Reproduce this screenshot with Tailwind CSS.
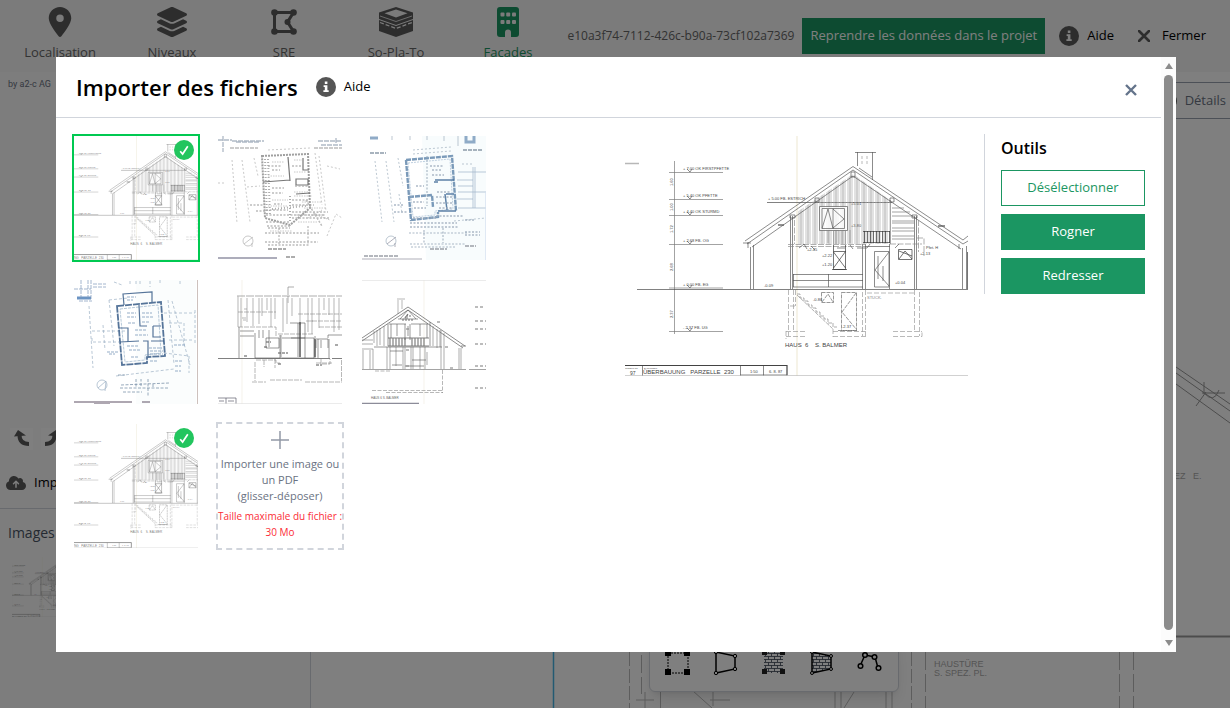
<!DOCTYPE html>
<html lang="fr">
<head>
<meta charset="utf-8">
<meta name="viewport" content="width=device-width, initial-scale=1">
<title>Importer des fichiers</title>
<script src="https://cdn.jsdelivr.net/npm/@tailwindcss/browser@4"></script>
</head>
<body class="h-screen overflow-hidden bg-white font-['Open_Sans','Noto_Sans',sans-serif] text-[13px] text-black">

<!-- Shared drawings -->
<svg class="absolute h-0 w-0" aria-hidden="true">
  <defs>
    <pattern id="boards" width="7" height="10" patternUnits="userSpaceOnUse">
      <path d="M1 0V10" stroke="#777" stroke-width=".7"/><path d="M3 0V10M6 0V10" stroke="#aaa" stroke-width=".7"/>
    </pattern>
    <pattern id="brick" width="6" height="6" patternUnits="userSpaceOnUse">
      <path d="M0 .5H6M0 3.500H6M1.500 .5V3.500M4.500 3.500V6.500" stroke="#374151" stroke-width=".8" fill="none"/>
    </pattern>
    <symbol id="info" viewBox="0 0 20 20">
      <circle cx="10" cy="10" r="10" fill="currentColor"/>
      <path d="M8.800 4.600h2.600v2.500H8.800zM7.600 8.300h3.800v5h1.300v1.700H7.400v-1.700h1.400v-3.300H7.600z" fill="#fff"/>
    </symbol>
    <symbol id="check" viewBox="0 0 20 20">
      <circle cx="10" cy="10" r="10" fill="#22c55e"/>
      <path d="M6.200 11.200L8.600 14L13.800 6.200" fill="none" stroke="#fff" stroke-width="1.700"/>
    </symbol>
    <g id="elevation" fill="none" stroke="#555" stroke-width=".8" font-family="Liberation Sans, sans-serif">
      <path d="M0 27.500H14" stroke="#aaa" stroke-width="1.500"/>
      <path d="M172 0V240" stroke="#f0ecda" stroke-width="1.500"/>
      <path d="M49.500 25V198M44 36.500H98M44 63.500H98M44 79.500H98M44 108.500H98M44 152H98M44 195.500H98" stroke="#777"/>
      <path d="M62 33l3 3 2-3M62 60l3 3 2-3M62 76l3 3 2-3M62 105l3 3 2-3M62 149l3 3 2-3M62 192l3 3 2-3"/>
      <g fill="#444" stroke="none" font-size="4">
        <text x="58" y="34">+ 7.00 OK FIRSTPFETTE</text><text x="58" y="61">+ 5.40 OK PFETTE</text>
        <text x="58" y="77">+ 4.40 OK STURMD</text><text x="58" y="106">+ 2.68 FB. OG</text>
        <text x="58" y="150">+ 0.00 FB. EG</text><text x="58" y="193">- 2.37 FB. UG</text>
        <text x="143" y="64">+ 5.00 FB. ESTRICH</text>
        <text transform="translate(48 50) rotate(-90)">1.60</text><text transform="translate(48 75) rotate(-90)">1.00</text>
        <text transform="translate(48 97) rotate(-90)">1.72</text><text transform="translate(48 135) rotate(-90)">2.68</text>
        <text transform="translate(48 182) rotate(-90)">2.37</text>
        <text x="139" y="151">-0.09</text><text x="226" y="91">+3.80</text><text x="226" y="69">+5.01</text>
        <text x="197" y="121">+2.22</text><text x="197" y="130">+1.20</text><text x="182" y="115">+2.45</text>
        <text x="188" y="165">-0.86</text><text x="270" y="148">+0.04</text><text x="295" y="119">+2.13</text><text x="217" y="192">-2.37</text>
        <text x="242" y="163" fill="#888">STUCK.</text><text x="301" y="113">Pfet. H</text>
      </g>
      <path d="M142 66.500H267M12 153.500H343" stroke="#444"/>
      <!-- roof -->
      <path d="M172 76L228 38L265 64V108H172Z" fill="url(#boards)" stroke="none"/>
      <path d="M120 105L228 30.500L338 104L343 100M122 108L228 34L338 108L343 105M127 111L228 40L336 113M118 107H126M123 106V112M334 113V108"/>
      <path d="M153 89H159M313 90H320" stroke-width="1.500"/>
      <path d="M230 16.500H251M232.500 16V30M247.500 16V44M234 32L247 41M226 36h4v5h-4zM190 62h4v4h-4zM265 62h4v4h-4zM165 79h5v3h-5zM287 79h5v3h-5z"/>
      <path d="M237 20V28M242 20V28" stroke-dasharray="3 2" stroke="#999"/>
      <!-- side boards -->
      <path d="M265.500 64V108M267 72H279M267 76H285M267 80H288M267 85H289M267 87H289M267 92H289M267 95H289M267 100H289M267 103H289" stroke="#777"/>
      <!-- walls and posts -->
      <path d="M125.500 111V153M128.500 109V153M165.500 80V153M167.500 80V153M289.500 80V153M291.500 80V153M337.500 112V153M341.500 110V153" stroke="#555"/>
      <path d="M342.500 116V153" stroke="#333"/>
      <path d="M169.500 84V108M293.500 84V116M292 102H299V120M163 108.500H240M163 110.500H240M265 108H297" stroke="#888" stroke-dasharray="6 1.500"/>
      <path d="M174 112l5-4 3 5M186 110l4 4M212 112h8M225 109l3 4M270 112l4-4M232 112h10l3-4"/>
      <!-- openings -->
      <path d="M194.500 70.500H222.500V94.500H194.500zM197 72.500H219.500V92.500H197zM208 72.500V92.500M197 92.500L203 73L208 92.500M208 73L219 83L208 92" fill="#fff" fill-opacity=".8"/>
      <path d="M208.500 94V108M211 95V108M214 95V108M217 95V108M220.500 94V108M203 94V107M225 94V107" stroke="#888"/>
      <path d="M208.500 109V133.500H220.500V109M208.500 115.500H220.500L208.500 132M208.500 116L220.500 132M207 133.500H222" stroke="#333"/>
      <path d="M238 95.500H265M238 106.500H265M239.500 95V107M242.500 95V107M245.500 95V107M248.500 95V107M251.500 95V107M254.500 95V107M257.500 95V107M260.500 95V107M264.500 95V107" stroke="#333"/>
      <path d="M168 138.500H238M168 144.500H238M168 151H238M203.500 138V151M168.500 138V151" stroke="#555"/>
      <path d="M237.500 108V153M240.500 108V153M240 110.500H265M264.500 108V153M249.500 115.500H264V151H249.500zM264 116L250 134L264 150M253 120V143M258 130V145" stroke="#555"/>
      <path d="M273.500 113.500H287V123.500H273.500zM274 123L280 115L287 123M274 115L287 120" stroke="#333"/>
      <!-- basement -->
      <path d="M163.500 154V200M168.500 154V195M170.500 154V170M165 170H171M237.500 156V200M240.500 154V200M289.500 154V195M294.500 156V200M242 157H289M161 195.500H180M161 200.500H182M161 195V203M208 195.500H241M208 200.500H241M208 193V201M268 195.500H297M268 200.500H297V195" stroke="#999" stroke-dasharray="5 2"/>
      <path d="M172 158h3v4h4v3h4v4h4v3h4v4h4v4h4v3h4v4h5v4h4M172 159L208 193" stroke="#888" stroke-dasharray="4 1"/>
      <path d="M196.500 156.500H208.500V166.500H196.500zM197 166L203 158L208 166M216.500 156.500H231.500V194.500H216.500zM231 157L217 176L231 193M213 194.500H233" stroke="#666" stroke-dasharray="4 1"/>
      <text x="160" y="211" font-size="6" fill="#444" stroke="none" xml:space="preserve">HAUS  6    S. BALMER</text>
      <!-- title block -->
      <path d="M0 229.500H162V239.500" stroke="#222" stroke-width="1.200"/>
      <path d="M17.500 230V240M115.500 230V240M138.500 230V240M115 239H162" stroke="#555"/>
      <path d="M0 239.500H343" stroke="#bbb" stroke-width=".8"/>
      <g fill="#444" stroke="none"><text x="18" y="238" font-size="6" xml:space="preserve">ÜBERBAUUNG   PARZELLE  230</text>
      <text x="0" y="233" font-size="2">PROJEKT NR</text><text x="19" y="233" font-size="2">BAUPROJEKT</text><text x="5" y="239" font-size="5">97</text>
      <text x="125" y="237" font-size="4">1:50</text><text x="144" y="237" font-size="4">6. 8. 87</text></g>
    </g>
  </defs>
</svg>

<div class="flex h-full flex-col">
  <header class="flex h-[72px] shrink-0 items-start bg-[#f6f6f6] pl-1 text-[#666]">
    <nav class="flex shrink-0">
      <a href="#" class="flex w-28 flex-col items-center gap-1 pt-[7px] leading-[22px]">
        <svg class="h-[30px] w-[30px]" viewBox="-64 0 512 512" fill="#5a5a5a"><path d="M215.700 499.200C267 435 384 279.400 384 192C384 86 298 0 192 0S0 86 0 192c0 87.400 117 243 168.300 307.200c12.300 15.300 35.100 15.300 47.400 0zM192 128a64 64 0 1 1 0 128 64 64 0 1 1 0-128z"/></svg>
        Localisation</a>
      <a href="#" class="flex w-28 flex-col items-center gap-1 pt-[7px] leading-[22px]">
        <svg class="h-[30px] w-[34px]" viewBox="0 0 576 512" fill="#5a5a5a"><path d="M264.500 5.200c14.900-6.900 32.100-6.900 47 0l218.600 101c8.500 3.900 13.900 12.400 13.900 21.800s-5.400 17.900-13.900 21.800l-218.600 101c-14.900 6.900-32.100 6.900-47 0L45.900 149.800C37.400 145.800 32 137.300 32 128s5.400-17.900 13.900-21.800L264.500 5.200zM476.900 209.600l53.200 24.600c8.500 3.900 13.900 12.400 13.900 21.800s-5.400 17.900-13.900 21.800l-218.600 101c-14.900 6.900-32.100 6.900-47 0L45.900 277.800C37.400 273.800 32 265.300 32 256s5.400-17.900 13.900-21.800l53.200-24.600 152 70.200c23.400 10.800 50.400 10.800 73.800 0l152-70.200zm-152 198.200l152-70.200 53.200 24.600c8.500 3.900 13.900 12.400 13.900 21.800s-5.400 17.900-13.900 21.800l-218.600 101c-14.900 6.900-32.100 6.900-47 0L45.900 405.800C37.400 401.800 32 393.300 32 384s5.400-17.900 13.900-21.800l53.200-24.600 152 70.200c23.400 10.800 50.400 10.800 73.800 0z"/></svg>
        Niveaux</a>
      <a href="#" class="flex w-28 flex-col items-center gap-1 pt-[7px] leading-[22px]">
        <svg class="h-[30px] w-[30px]" viewBox="0 0 30 30"><path d="M5.500 5.500H24.500L18.500 15L24.500 24.500H5.500Z" fill="none" stroke="#5a5a5a" stroke-width="3"/><g fill="#5a5a5a"><circle cx="5.500" cy="5.500" r="3.300"/><circle cx="24.500" cy="5.500" r="3.300"/><circle cx="18.500" cy="15" r="3"/><circle cx="5.500" cy="24.500" r="3.300"/><circle cx="24.500" cy="24.500" r="3.300"/></g></svg>
        SRE</a>
      <a href="#" class="flex w-28 flex-col items-center gap-1 pt-[7px] leading-[22px]">
        <svg class="h-[30px] w-[34px]" viewBox="0 0 34 30"><path fill="#5a5a5a" d="M17 0L34 5.500V12L17 18L0 12V5.500ZM0 13L17 19L34 13V24L17 30L0 24Z"/><path fill="#f6f6f6" d="M17 2.500L28.500 6.300L17 10.500L5.500 6.300Z"/><path d="M1 9L17 14.500L33 9" fill="none" stroke="#f6f6f6" stroke-width=".8"/><path d="M1 15.500L17 21.500L33 15.500" fill="none" stroke="#f6f6f6" stroke-width="1.300" stroke-dasharray="4 2"/></svg>
        So-Pla-To</a>
      <a href="#" class="flex w-28 flex-col items-center gap-1 pt-[7px] leading-[22px] text-[#1b9662]">
        <svg class="h-[30px] w-[22px]" viewBox="0 0 22 30"><path fill="#1b9662" fill-rule="evenodd" d="M3 0H19a3 3 0 0 1 3 3V27a3 3 0 0 1-3 3H14V25.500a3 3 0 0 0-6 0V30H3a3 3 0 0 1-3-3V3a3 3 0 0 1 3-3Z"/><g fill="#f6f6f6"><rect x="3.500" y="5.500" width="4" height="4" rx="1"/><rect x="9.200" y="5.500" width="4" height="4" rx="1"/><rect x="15" y="5.500" width="4" height="4" rx="1"/><rect x="3.500" y="13" width="4" height="4" rx="1"/><rect x="9.200" y="13" width="4" height="4" rx="1"/><rect x="15" y="13" width="4" height="4" rx="1"/></g></svg>
        Facades</a>
    </nav>
    <div class="ml-auto flex h-9 items-center self-center pr-6 whitespace-nowrap">
      <span class="mr-2 text-xs">e10a3f74-7112-426c-b90a-73cf102a7369</span>
      <button class="h-9 bg-[#1b9662] px-2 text-white">Reprendre les données dans le projet</button>
      <button class="ml-3.5 flex items-center gap-2 text-black"><svg class="h-5 w-5 text-[#5a5a5a]"><use href="#info"/></svg>Aide</button>
      <button class="ml-6 flex items-center gap-3 text-black"><svg class="h-3 w-3" viewBox="0 0 12 12"><path d="M1 1L11 11M11 1L1 11" stroke="#5a5a5a" stroke-width="2.600" stroke-linecap="round"/></svg>Fermer</button>
    </div>
  </header>

  <div class="flex min-h-0 flex-1">
    <aside class="flex w-[311px] shrink-0 flex-col border-r border-gray-300 bg-[#fbfbfb]">
      <p class="px-2 pt-1.5 font-['Roboto'] text-[9px] leading-3 text-gray-500">by a2-c AG</p>
      <div class="mt-auto flex gap-2 px-2.5">
        <button aria-label="Annuler" class="h-[22px] w-[23px] bg-white"><svg class="h-[22px] w-[23px]" viewBox="0 0 23 22"><path d="M9.500 7C9.500 12 12 16 19 16" fill="none" stroke="#5a5a5a" stroke-width="4"/><path d="M4 8.500L8 2L16 7.500L10 8Z" fill="#5a5a5a"/></svg></button>
        <button aria-label="Rétablir" class="h-[22px] w-[23px] bg-white"><svg class="h-[22px] w-[23px]" viewBox="0 0 23 22"><path d="M13.500 7C13.500 12 11 16 4 16" fill="none" stroke="#5a5a5a" stroke-width="4"/><path d="M19 8.500L15 2L7 7.500L13 8Z" fill="#5a5a5a"/></svg></button>
      </div>
      <button class="mt-5 flex h-[26px] items-center gap-2 px-1.5"><svg class="h-4 w-5" viewBox="0 0 640 512" fill="#5a5a5a"><path d="M144 480C64.500 480 0 415.500 0 336c0-62.800 40.200-116.200 96.200-135.900c-.1-2.700-.2-5.400-.2-8.100c0-88.400 71.600-160 160-160c59.300 0 111 32.200 138.700 80.200C409.900 102 428.300 96 448 96c53 0 96 43 96 96c0 12.200-2.300 23.800-6.400 34.600C596 238.400 640 290.100 640 352c0 70.700-57.300 128-128 128H144zm79-217c-9.400 9.400-9.400 24.600 0 33.900s24.600 9.400 33.900 0l39-39V392c0 13.300 10.700 24 24 24s24-10.700 24-24V257.900l39 39c9.400 9.400 24.600 9.400 33.900 0s9.400-24.600 0-33.900l-80-80c-9.400-9.400-24.600-9.400-33.900 0l-80 80z"/></svg>Importer</button>
      <div class="mt-3 h-[200px] border-t border-gray-300 px-2 pt-3">
        <h2 class="text-sm leading-6 text-gray-600">Images</h2>
        <svg class="mt-3 ml-1 h-[60px] w-[60px]" viewBox="51 0 240 240" stroke-opacity=".9" fill-opacity=".7"><use href="#elevation"/></svg>
      </div>
    </aside>
    <main class="relative min-w-0 flex-1 overflow-hidden bg-white">
      <svg class="absolute inset-0 h-full w-full" aria-hidden="true">
        <g transform="translate(-311 -72)" fill="none" stroke="#bbb" stroke-width="1">
          <path d="M553.500 119V708" stroke="#46b4e4" stroke-width="1.500"/>
          <path d="M1176 367L1230 404M1176 373L1230 411M1176 384L1230 423M1204 382V394M1196 406L1206 392M1202 393H1225M1204 393Q1214 404 1219 390" stroke="#999"/>
          <path d="M1170 636.500H1230" stroke="#999" stroke-width="2"/>
          <path d="M629.500 652V708M911.500 652V708" stroke-dasharray="14 3"/><path d="M641.500 655V694M636 700H656M645 692V708M925.500 652V708M1119.500 652V708M1133.500 652V708" stroke-dasharray="18 4"/>
          <path d="M660.500 690V708M693 691L712 708M713 691V706M710 700H730M835 691V708M841 691V708M854 692L844 708M886 691V708M892 691V708"/>
          <g font-family="Liberation Sans, sans-serif" font-size="9" fill="#aaa" stroke="none"><text x="934" y="667">HAUSTÜRE</text><text x="934" y="676">S. SPEZ. PL.</text><text x="1174" y="479" xml:space="preserve">EZ   E.</text></g>
        </g>
      </svg>
      <div class="relative mt-2.5 flex h-[37px] items-center justify-end gap-2 border-y border-gray-400 bg-white pr-1 text-gray-500">
        <svg class="h-4 w-4" viewBox="0 0 20 20"><circle cx="10" cy="10" r="10" fill="#5a5a5a"/></svg>
        <button>Détails</button>
      </div>
      <div class="absolute bottom-4 left-[338px] flex h-[57px] rounded-md border border-gray-300 bg-white px-1 pt-3.5 shadow-lg">
        <button aria-label="Rectangle" class="flex w-12 justify-center"><svg class="h-[26px] w-[26px]" viewBox="0 0 26 26"><path d="M3 3H23V23H3Z" fill="none" stroke="#000" stroke-dasharray="2 1"/><path d="M0 0h6v6H0zM19 0h6v6h-6zM0 19h6v6H0zM19 19h6v6h-6z"/></svg></button>
        <button aria-label="Polygone" class="flex w-12 justify-center"><svg class="h-[26px] w-[26px]" viewBox="0 0 26 26"><path d="M3 2L22 6V19L3 23Z" fill="none" stroke="#000" stroke-width="1.500"/><g fill="#fff" stroke="#000"><circle cx="3" cy="2" r="1.700"/><circle cx="22" cy="6" r="1.700"/><circle cx="22" cy="19" r="1.700"/><circle cx="3" cy="23" r="1.700"/></g></svg></button>
        <button aria-label="Rectangle texturé" class="flex w-12 justify-center"><svg class="h-[26px] w-[26px]" viewBox="0 0 26 26"><path d="M3 2H22V23H3Z" fill="url(#brick)"/><path fill="#222" d="M1 0h5v5H1zM19 0h5v5h-5zM1 19h5v5H1zM19 19h5v5h-5z"/></svg></button>
        <button aria-label="Polygone texturé" class="flex w-12 justify-center"><svg class="h-[26px] w-[26px]" viewBox="0 0 26 26"><path d="M3 2L22 6V19L3 23Z" fill="url(#brick)" stroke="#000" stroke-width="1.500"/><g fill="#fff" stroke="#000"><circle cx="3" cy="2" r="1.500"/><circle cx="22" cy="6" r="1.500"/><circle cx="22" cy="19" r="1.500"/><circle cx="3" cy="23" r="1.500"/></g></svg></button>
        <button aria-label="Ligne brisée" class="flex w-12 justify-center"><svg class="h-[26px] w-[26px]" viewBox="0 0 26 26"><path d="M3 16L8 5L18 7L21 18" fill="none" stroke="#000" stroke-width="1.500"/><g fill="#fff" stroke="#000" stroke-width="1.500"><circle cx="3.500" cy="16" r="2.300"/><circle cx="8" cy="5" r="2.300"/><circle cx="17.500" cy="7" r="2.300"/><circle cx="21.500" cy="18" r="2.300"/></g></svg></button>
      </div>
    </main>
  </div>
</div>

<!-- Import dialog -->
<div class="fixed inset-0 flex bg-black/50 pt-[57px] pr-[54px] pb-14 pl-14">
  <section role="dialog" aria-labelledby="dialog-title" class="flex min-w-0 flex-1 overflow-hidden bg-white">
    <div class="flex min-w-0 flex-1 flex-col">
      <div class="flex h-[61px] shrink-0 items-center border-b border-gray-300 pr-5 pl-5">
        <h1 id="dialog-title" class="text-[22px] font-semibold">Importer des fichiers</h1>
        <button class="ml-[18px] flex items-center gap-2"><svg class="h-5 w-5 text-[#555]"><use href="#info"/></svg>Aide</button>
        <button aria-label="Fermer" class="mt-1.5 ml-auto flex h-5 w-5 items-center justify-center"><svg class="h-3 w-3" viewBox="0 0 12 12"><path d="M1 1L11 11M11 1L1 11" stroke="#64748b" stroke-width="2.400"/></svg></button>
      </div>
      <div class="flex flex-1 items-start p-4">
        <div class="grid w-1/2 max-w-[448px] min-w-[432px] grid-cols-[repeat(auto-fill,128px)] gap-4 pr-4">
          <button aria-label="Façade sud, sélectionnée" class="relative h-32 w-32 border-2 border-green-500">
            <svg class="h-full w-full" viewBox="51 0 240 240" stroke-opacity=".75" fill-opacity=".7"><use href="#elevation"/></svg>
            <svg class="absolute top-1 right-1 h-5 w-5"><use href="#check"/></svg>
          </button>
          <button aria-label="Plan 1" class="h-32 w-32 border-2 border-transparent">
            <svg class="h-full w-full" viewBox="0 0 124 124" fill="none" stroke="#aaa" stroke-width=".8" stroke-opacity=".8">
              <path d="M0 4H14M5 0V16M14 5H46M18 6H42M100 5H124M103 9H124M118 2V8" stroke="#9ba7b8" stroke-width="1.300" stroke-dasharray="5 1"/><path d="M12 12H40M96 12H124" stroke-dasharray="4 1" stroke-width="1.500"/>
              <path d="M14 24L19 87M24 24L32 86M36 22L40 40M97 17L104 69M101 20L108 75M109 100L118 78L124 82M0 47H8M29 51L42 50M109 30L122 33M50 14L92 12" stroke-dasharray="2 2"/>
              <path d="M44 20L90 18L92 72L72 89L47 82Z" stroke="#888" stroke-width="2" stroke-dasharray="2 1"/>
              <path d="M47 23L49 80M50 23L52 80M54 73L88 70M72 60V87" stroke="#999" stroke-width="2" stroke-dasharray="1 2"/>
              <path d="M70 21L72 45M45 46L72 44M78 58L92 57M78 43H90V49H78zM85 22V34H91" stroke="#555" stroke-width="1.200"/>
              <path d="M50 30H64M54 34H62M54 52H66M54 57H65M74 30H86M77 50H90M74 64H90M74 69H96M56 68H64M48 74H70M74 76H110M48 79H106M74 82H112M48 86H72M49 90H73M50 92H72M88 64L104 90M38 75H47M32 69H45" stroke-width="1.500" stroke-dasharray="2 1.500"/>
              <path d="M76 56H92M76 60H94M84 66H104M86 72H108M78 79H108M80 86H100M54 26H66M76 24H84M76 36H88M50 40H66M54 64H70M50 70H70M96 78L112 84M90 82L104 74M52 95H74" stroke-dasharray="1.500 1"/>
              <path d="M47 97H101M47 106H100M50 109H92M61 92V108M90 90V108" stroke-width="1.300" stroke-dasharray="2 1.500"/><path d="M50 113H68M68 121H78" stroke="#777" stroke-width="1.500" stroke-dasharray="4 1"/>
              <circle cx="30" cy="105" r="5"/><path d="M26 108L35 101M34 107V111"/><path d="M0 122H59" stroke="#99a" stroke-width="2"/>
            </svg></button>
          <button aria-label="Plan 2" class="h-32 w-32 border-2 border-transparent">
            <svg class="h-full w-full" viewBox="0 0 124 124" fill="none" stroke="#9dadbd" stroke-width=".8" stroke-opacity=".85">
              <path d="M60 0H124V124H64Z" fill="#f8fcfd" stroke="none"/>
              <path d="M8 2H16M104 0V6H112V0" stroke="#7d9cbd" stroke-width="3"/><path d="M8 17H24M101 14H121" stroke="#789" stroke-width="1.700" stroke-dasharray="4 1"/><path d="M30 0V4M48 0V4M65 0V4M82 0V5M96 0V10"/>
              <path d="M13 25L20 86M24 25L32 86M36 22L41 50M51 14L89 11M51 18L89 15M37 58L40 77M100 28H112M92 85L124 82" stroke-dasharray="2 2"/>
              <path d="M44 24L90 20L94 75M44 24L49 84L76 81V76M47 61L70 59L71 71" stroke="#6488ad" stroke-width="2.400" stroke-dasharray="5 1"/><path d="M46 27L88 23L91 73L73 75V79L51 81Z" stroke="#a1b9d1" stroke-dasharray="2 1"/>
              <path d="M73 44H92M72 46H76M83 58L85 74M84 58H92M76 75L94 75" stroke="#416b98" stroke-width="1.500"/>
              <path d="M111 31V72M113 31V72M96 36H124M95 44H111M96 50H111M96 56H124M95 63H111M96 72H124" stroke="#9bb0c5"/>
              <path d="M68 30H82M70 34H80M70 39H82M54 50H62M51 66H62M52 72H64M75 56H88M74 61H90M74 67H90M77 72H90M51 82H74M48 87H95M48 91H96M74 80H102M32 69H42M32 76H45M103 84H112M103 96H118M103 99H118" stroke-width="1.400" stroke-dasharray="2 1.500"/>
              <path d="M47 97H105M48 108H103M49 111H94M65 20V70M62 94V108M81 92V107" stroke-width="1.200" stroke-dasharray="2 1.500"/><path d="M2 120H36M103 110H114M68 113H85" stroke="#8a8f98" stroke-width="1.500" stroke-dasharray="4 1"/>
              <circle cx="29" cy="105" r="5"/><path d="M25 108L34 101M33 107V111M0 123H60" stroke="#889"/><path d="M123.500 55V124" stroke="#d4e0ee"/>
            </svg></button>
          <button aria-label="Plan 3" class="h-32 w-32 border-2 border-transparent">
            <svg class="h-full w-full" viewBox="0 0 124 124" fill="none" stroke="#9fb3c6" stroke-width=".8" stroke-opacity=".9">
              <path d="M62 0H122V124H62Z" fill="#fbfdfd" stroke="none"/><path d="M3 18H17" stroke="#5b88bd" stroke-width="3"/><path d="M7 0V18M14 0V18M17 0V22M0 9H17M19 4H32M19 7H32M5 21H16" stroke="#829abb" stroke-dasharray="4 1"/>
              <path d="M40 2L48 5M56 1V5M62 1V6M66 1V5M76 1V7M86 0V4M106 1V6M15 26L19 88M18 51H52M18 58V62H45M35 20L40 66M35 20L54 18M94 20L100 84M42 96L100 89M98 21L116 85M29 45L31 70M121 30V65M90 33H121M95 43H110V65M95 60H120M90 73L115 76V93" stroke-dasharray="3 2"/>
              <path d="M43 26L87 22L91 76L73 77V83L48 85Z" stroke="#43658e" stroke-width="1.800" stroke-dasharray="7 1"/><path d="M46 29L84 25L87 73L71 75V80L51 82Z" stroke="#9bb4ca" stroke-dasharray="3 1"/>
              <path d="M50 25L49 14L78 12V22M65 25L66 46H73M79 46H87M46 62L65 61M69 61H74V76M77 61H90M79 46V57H87M45 48H54V62" stroke="#43658e" stroke-width="1.200"/>
              <path d="M53 17H62M53 20H59M53 33H62M53 37H62M54 43H61M68 33H78M68 37H80M68 42H76M61 50H72M61 55H74M53 66H65M55 70H67M57 77H64M75 68H88M76 71H89M76 74H89M76 81H84M33 72H44M35 74H41M100 65H112M101 81H108M101 86H107M101 91H107" stroke="#8ba4c0" stroke-width="1.200" stroke-dasharray="3 1"/>
              <path d="M46 108H95M47 105L95 103M62 99V108M74 99V116M67 106V99M79 104V108M44 95H51M49 112H68" stroke="#7088a2" stroke-dasharray="3 1.500"/><circle cx="28" cy="105" r="5"/><path d="M24 108L32 101L31 111"/>
              <path d="M0 122H58M20 124H36M68 122H76" stroke="#887d8d" stroke-width="1.500"/><path d="M123.500 0V124" stroke="#b9a8a3"/>
            </svg></button>
          <button aria-label="Façade 2" class="h-32 w-32 border-2 border-transparent">
            <svg class="h-full w-full" viewBox="0 0 124 124" fill="none" stroke="#888" stroke-width=".8" stroke-opacity=".75">
              <path d="M24 0V124" stroke="#eeeadd"/><path d="M70 7H76M70 7V23M19 16H124" stroke="#777" stroke-dasharray="8 1"/>
              <path d="M20 16V47M23 18V47M29 18V42M35 18V46M41 18V44M44 18V36M49 18V30M53 18V47M57 18V39M65 18V52M69 18V44M74 18V36M82 18V45M90 18V52M94 18V54M101 18V48M106 18V30M111 18V35M116 18V52M121 18V50" stroke="#bbb" stroke-width="1.400"/>
              <path d="M20 32H58M26 29H29M80 34H124M88 41H124M25 40H28M93 41H95M20 47H58V57M60 54H96M101 47H124M24 38H28" stroke-dasharray="5 1"/>
              <path d="M21 47V78M37 53V78H62V55M22 51H36M22 56H36M41 50V58M45 50V58M48 58H61V68H48V58M51 50V67M63 55V78M72 43H87V58H73M80 43V77M82 43V77M87 58V78M64 58H96V78H64M98 59H110V68M100 59V78M110 58V55H124M103 60V68M111 59V78M97 56V78M98 68V60" stroke="#555"/>
              <path d="M0 78.500H112M114 78.500H124" stroke="#555" stroke-width="1.200"/><path d="M82 42V77M97 59V77" stroke="#444" stroke-width="1.500"/>
              <path d="M38 80H58V84M46 80V87M57 79V88M62 83H59M103 79V84H112V79M98 83H114M37 82V101M123.500 80V101M34 102H48M52 100H84M87 102H124" stroke-dasharray="5 1"/>
              <path d="M60 73H70M60 84H64M98 85H104M26 76H29M117 65H121M48 62H53M46 67H50" stroke="#666" stroke-width="1.500" stroke-dasharray="3 1"/><path d="M0 118H18V124M8 118V124M1 121H6M10 121H16" stroke="#445"/><path d="M0 123.500H124" stroke="#ddd"/>
            </svg></button>
          <button aria-label="Façade 3" class="h-32 w-32 border-2 border-transparent">
            <svg class="h-full w-full" viewBox="0 0 124 124" fill="none" stroke="#888" stroke-width=".8" stroke-opacity=".75">
              <path d="M62 0V124" stroke="#eeeadd"/><path d="M0 .5H124" stroke="#ddd"/><path d="M35 19H43M36 20V34M40 20V29"/>
              <path d="M0 58L46 27L103 66M0 61L46 30L101 68M99 66H104" stroke="#666" stroke-width="1"/>
              <path d="M27 44H44M49 44H66M46 30L38 39M46 30L54 39M36 39H56M26 44V66M29 44V58M35 44V56M43 44V60M48 44V60M58 44V56M65 44V58M68 42V66M46 46V56" stroke="#555"/>
              <path d="M46 34l-4 5M40 40h12M44 36h5" stroke="#444" stroke-width="1.200" stroke-dasharray="2 1"/>
              <path d="M26 58H67M26 66H67M28 58V66M31 58V66M34 58V66M37 58V66M40 58V66M43 58V66M50 58V66M53 58V66M56 58V66M59 58V66M62 58V66" stroke="#555" stroke-width="1.200"/>
              <path d="M12 51V63M15 50V66M18 48V65M22 46V66M0 60H11M0 64H11M71 46V66M75 49V68M78 50V67M0 69H11V89M1 70V89M8 70V89M25 67V89M28 67V89M34 67V86M41 67V89M43 67V89M49 67V89M51 67V89M58 67V89M63 67V89M65 72V85M79 50V89M82 53V89M97 68V89M99 68V89" stroke="#777"/>
              <path d="M12 67H80M28 71H41M43 86H62M50 80H64M30 85H40" stroke="#555"/><path d="M0 89.500H104M107 89.500H124" stroke="#666"/>
              <path d="M80.500 90V113M10 110.500H81M24 112.500H81M13 91H28" stroke-dasharray="4 1.500"/>
              <path d="M113 27H121M113 41H124M113 49H124M113 64H124M113 86H124M113 108H124M83 67H87M75 42H80M88 88H92M43 38H48M44 49H48M44 70H48M44 86H48" stroke="#888" stroke-width="1.500" stroke-dasharray="3 2"/>
              <text x="9" y="119" font-size="3" fill="#666" stroke="none" font-family="Liberation Sans, sans-serif">HAUS 6 S. BALMER</text><path d="M0 123.500H57" stroke="#667" stroke-width="1.500"/>
            </svg></button>
          <button aria-label="Façade sud, copie" class="relative h-32 w-32 border-2 border-transparent">
            <svg class="h-full w-full" viewBox="51 0 240 240" stroke-opacity=".75" fill-opacity=".7"><use href="#elevation"/></svg>
            <svg class="absolute top-1 right-1 h-5 w-5"><use href="#check"/></svg>
          </button>
          <button class="flex h-32 w-32 flex-col items-center border-2 border-dashed border-gray-300 pt-1.5 text-[11px] leading-4 text-gray-500">
            <svg class="mb-1.5 h-5 w-5 shrink-0" viewBox="0 0 20 20"><path d="M10 1V19M1 10H19" stroke="#9399a6" stroke-width="1.500"/></svg>
            <span class="whitespace-nowrap">Importer une image ou<br>un PDF<br>(glisser-déposer)</span>
            <span class="mt-1 text-[10px] leading-4 whitespace-nowrap text-red-500">Taille maximale du fichier :<br>30 Mo</span>
          </button>
        </div>
        <div class="flex min-w-0 flex-1 justify-end pr-4">
          <svg class="mt-0.5 w-[343px]" viewBox="0 0 343 240" role="img" aria-label="Façade, Haus 6" stroke-opacity=".85"><use href="#elevation"/></svg>
        </div>
        <div class="flex w-[161px] shrink-0 flex-col gap-2 border-l border-gray-300 pl-4">
          <h2 class="text-base leading-7 font-semibold">Outils</h2>
          <button class="h-9 border border-[#1b9662] text-[#1b9662]">Désélectionner</button>
          <button class="h-9 bg-[#1b9662] font-medium text-white">Rogner</button>
          <button class="h-9 bg-[#1b9662] font-medium text-white">Redresser</button>
        </div>
      </div>
    </div>
    <div class="flex w-[15px] flex-col items-center justify-between bg-[#fcfcfc] py-1.5" aria-hidden="true">
      <svg class="h-1.5 w-2" viewBox="0 0 8 6"><path d="M4 0L8 6H0Z" fill="#8b8b8b"/></svg>
      <div class="mt-1.5 mb-2.5 w-[9px] flex-1 rounded-full bg-[#8b8b8b]"></div>
      <svg class="h-1.5 w-2" viewBox="0 0 8 6"><path d="M0 0H8L4 6Z" fill="#8b8b8b"/></svg>
    </div>
  </section>
</div>
</body>
</html>
